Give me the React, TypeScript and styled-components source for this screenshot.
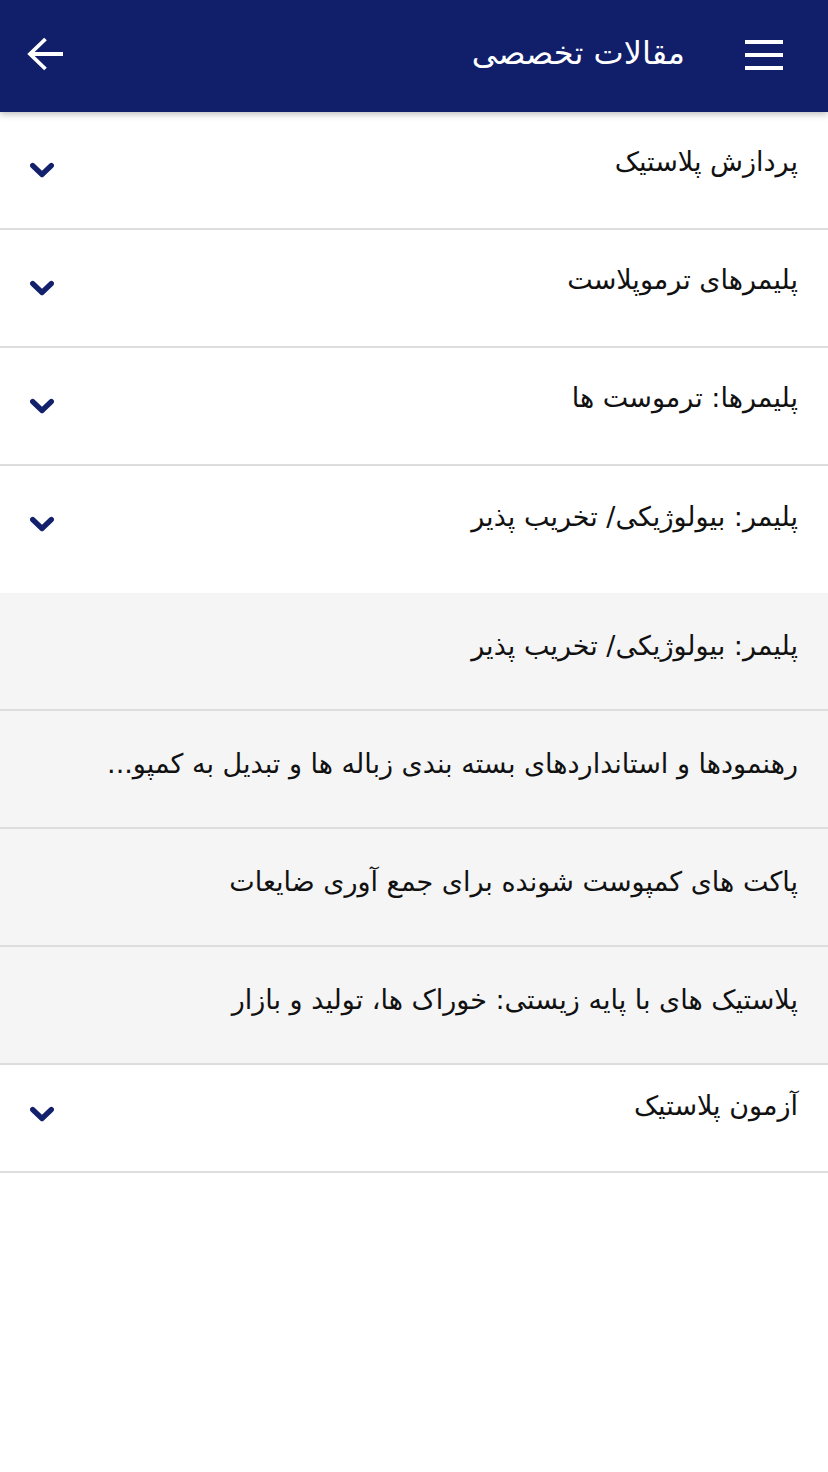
import React from "react";
import styled, { createGlobalStyle } from "styled-components";

const Global = createGlobalStyle`
  html, body { margin: 0; padding: 0; background: #ffffff; }
  body { font-family: "DejaVu Sans", "Noto Sans", sans-serif; }
  * { box-sizing: border-box; }
`;

const Page = styled.div`
  width: 828px;
  min-height: 1472px;
  background: #ffffff;
  direction: rtl;
`;

const TopBar = styled.header`
  position: relative;
  z-index: 2;
  height: 112px;
  background: #111e6a;
  display: flex;
  align-items: center;
  padding: 0 45px 0 26px;
  box-shadow: 0 2px 7px rgba(0, 0, 0, 0.28);
`;

const MenuButton = styled.button`
  width: 38px;
  height: 30px;
  padding: 0;
  border: 0;
  background: transparent;
  display: flex;
  flex-direction: column;
  justify-content: space-between;
  margin-left: 60px;
  margin-top: -2px;
`;

const MenuBar = styled.span`
  display: block;
  height: 4px;
  width: 38px;
  background: #ffffff;
`;

const Title = styled.h1`
  flex: 1;
  margin: 0 0 6px 0;
  font-size: 32px;
  font-weight: normal;
  color: #ffffff;
  line-height: 40px;
  text-align: right;
`;

const BackButton = styled.button`
  width: 40px;
  height: 40px;
  padding: 0;
  border: 0;
  background: transparent;
  display: flex;
  align-items: center;
  justify-content: center;
  margin-top: -4px;
`;

const List = styled.div`
  display: flex;
  flex-direction: column;
`;

const ItemHeader = styled.div<{ $height: number; $padTop: number; $border: boolean }>`
  height: ${(p) => p.$height}px;
  padding: ${(p) => p.$padTop}px 30px 0 30px;
  display: flex;
  align-items: flex-start;
  justify-content: space-between;
  background: #ffffff;
  border-bottom: ${(p) => (p.$border ? "2px solid #dddddd" : "none")};
`;

const Line = styled.div`
  height: 40px;
  display: flex;
  align-items: center;
`;

const Label = styled.span`
  font-size: 27px;
  color: #111111;
  line-height: 40px;
  white-space: nowrap;
`;

const ChevronBox = styled.span<{ $offset: number }>`
  width: 24px;
  height: 40px;
  margin-top: ${(p) => p.$offset}px;
  display: flex;
  align-items: center;
  justify-content: center;
`;

const SubList = styled.div`
  background: #f5f5f5;
  display: flex;
  flex-direction: column;
`;

const SubRow = styled.div`
  height: 118px;
  padding: 33px 30px 0 30px;
  border-bottom: 2px solid #dddddd;
  display: flex;
  align-items: flex-start;
`;

const Chevron = () => (
  <svg width="24" height="20" viewBox="0 0 24 20" aria-hidden="true">
    <polyline
      points="2.6,4.5 12,13.5 21.4,4.5"
      fill="none"
      stroke="#13206b"
      strokeWidth="5.2"
      strokeLinecap="round"
      strokeLinejoin="round"
    />
  </svg>
);

const ArrowBack = () => (
  <svg width="40" height="40" viewBox="0 0 40 40" aria-hidden="true">
    <path
      d="M4 20 H37 M19.5 5 L4 20 L19.5 35"
      fill="none"
      stroke="#ffffff"
      strokeWidth="3.8"
      strokeLinecap="butt"
      strokeLinejoin="miter"
    />
  </svg>
);

type Item = {
  title: string;
  height: number;
  padTop: number;
  chevron: number;
  border: boolean;
  children?: string[];
};

const items: Item[] = [
  { title: "پردازش پلاستیک", height: 118, padTop: 30, chevron: 9, border: true },
  { title: "پلیمرهای ترموپلاست", height: 118, padTop: 30, chevron: 9, border: true },
  { title: "پلیمرها: ترموست ها", height: 118, padTop: 30, chevron: 9, border: true },
  {
    title: "پلیمر: بیولوژیکی/ تخریب پذیر",
    height: 127,
    padTop: 31,
    chevron: 8,
    border: false,
    children: [
      "پلیمر: بیولوژیکی/ تخریب پذیر",
      "رهنمودها و استانداردهای بسته بندی زباله ها و تبدیل به کمپو...",
      "پاکت های کمپوست شونده برای جمع آوری ضایعات",
      "پلاستیک های با پایه زیستی: خوراک ها، تولید و بازار",
    ],
  },
  { title: "آزمون پلاستیک", height: 108, padTop: 21, chevron: 9, border: true },
];

export default function App() {
  return (
    <>
      <Global />
      <Page>
        <TopBar>
          <MenuButton aria-label="menu">
            <MenuBar />
            <MenuBar />
            <MenuBar />
          </MenuButton>
          <Title>مقالات تخصصی</Title>
          <BackButton aria-label="back">
            <ArrowBack />
          </BackButton>
        </TopBar>
        <List>
          {items.map((it) => (
            <React.Fragment key={it.title + it.height}>
              <ItemHeader $height={it.height} $padTop={it.padTop} $border={it.border}>
                <Line>
                  <Label>{it.title}</Label>
                </Line>
                <ChevronBox $offset={it.chevron}>
                  <Chevron />
                </ChevronBox>
              </ItemHeader>
              {it.children && (
                <SubList>
                  {it.children.map((c) => (
                    <SubRow key={c}>
                      <Line>
                        <Label>{c}</Label>
                      </Line>
                    </SubRow>
                  ))}
                </SubList>
              )}
            </React.Fragment>
          ))}
        </List>
      </Page>
    </>
  );
}
